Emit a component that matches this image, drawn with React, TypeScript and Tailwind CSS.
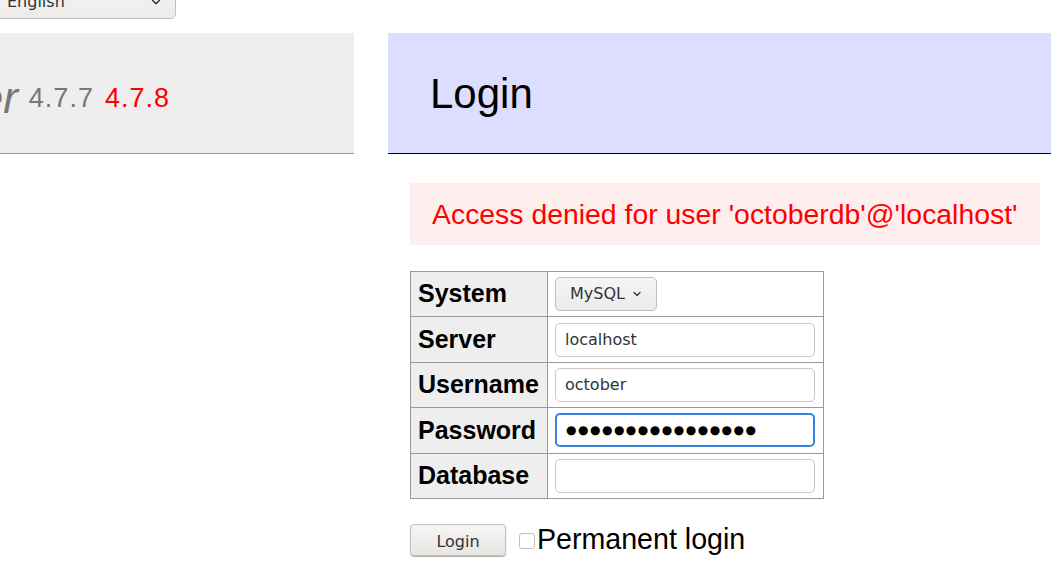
import { ChevronDown } from "lucide-react";

const rows = [
  { label: "System", kind: "select" },
  { label: "Server", kind: "text", value: "localhost" },
  { label: "Username", kind: "text", value: "october" },
  { label: "Password", kind: "password", value: "●●●●●●●●●●●●●●●●" },
  { label: "Database", kind: "text", value: "" },
];

function App() {
  return (
    <div className="h-[568px] w-[1051px] overflow-hidden bg-white font-['Liberation_Sans',Arial,sans-serif]">
      <div className="ml-[-7px] mt-[-15px] flex h-[34px] w-[183px] items-center justify-between rounded-[5px] border border-[#c0bfbc] bg-gradient-to-b from-[#f6f5f4] to-[#edebe9] pl-[13px] pr-[12px] font-['DejaVu_Sans',sans-serif] text-[16px] text-[#2e3436]">
        <span>English</span>
        <ChevronDown size={14} strokeWidth={2.5} />
      </div>

      <div className="mt-[14px] flex">
        <div className="flex h-[121px] w-[354px] shrink-0 items-center overflow-hidden border-b border-[#999] bg-[#eee] pt-[10px]">
          <span className="ml-[-146px] whitespace-nowrap text-[44px] italic leading-none text-[#777]">Adminer</span>
          <span className="ml-[11px] text-[27px] leading-none tracking-[1px] text-[#777]">4.7.7</span>
          <span className="ml-[11px] text-[27px] leading-none tracking-[1px] text-[#f00]">4.7.8</span>
        </div>

        <div className="ml-[34px] flex-1">
          <div className="flex h-[121px] items-center border-b border-black bg-[#ddf] pl-[42px]">
            <h2 className="text-[42px] text-black">Login</h2>
          </div>

          <div className="pl-[22px] pt-[29px]">
            <div className="flex h-[62px] w-[630px] items-center bg-[#fee] pl-[22px] text-[28.4px] text-[#f00]">
              Access denied for user 'octoberdb'@'localhost'
            </div>

            <table className="mt-[26px] w-[414px] border-collapse">
              <tbody>
                {rows.map((row) => (
                  <tr key={row.label} className="h-[45.4px]">
                    <th className="w-[137px] border border-[#999] bg-[#eee] px-[7px] text-left text-[25px] font-bold text-black">
                      {row.label}
                    </th>
                    <td className="border border-[#999] px-[7px]">
                      {row.kind === "select" ? (
                        <div className="flex h-[34px] w-[102px] items-center gap-[6px] rounded-[5px] border border-[#c0bfbc] bg-gradient-to-b from-[#f6f5f4] to-[#edebe9] pl-[14px] font-['DejaVu_Sans',sans-serif] text-[16px] text-[#2e3436]">
                          <span>MySQL</span>
                          <ChevronDown size={12} strokeWidth={2.5} />
                        </div>
                      ) : (
                        <div
                          className={
                            row.kind === "password"
                              ? "flex h-[34px] w-[260px] items-center rounded-[5px] border-2 border-[#3584e4] pl-[9px] font-['DejaVu_Sans',sans-serif] text-[12px] tracking-[1.5px] text-black"
                              : "flex h-[34px] w-[260px] items-center rounded-[5px] border border-[#cdc7c2] pl-[9px] font-['DejaVu_Sans',sans-serif] text-[16px] text-[#2e3436]"
                          }
                        >
                          {row.value}
                        </div>
                      )}
                    </td>
                  </tr>
                ))}
              </tbody>
            </table>

            <div className="mt-[21px] flex items-center">
              <div className="flex h-[32px] w-[96px] items-center justify-center rounded-[4px] border border-[#c0bfbc] bg-gradient-to-b from-[#f6f5f4] to-[#e8e6e3] pt-[3px] font-['DejaVu_Sans',sans-serif] text-[16px] text-[#2e3436] shadow-[0_1px_1px_#aaa]">
                Login
              </div>
              <div className="ml-[13px] mt-[1px] h-[16px] w-[16px] rounded-[3px] border border-[#c0bfbc] bg-white" />
              <span className="ml-[2px] mt-[-2px] text-[28.6px] text-black">Permanent login</span>
            </div>
          </div>
        </div>
      </div>
    </div>
  );
}

export default App;
